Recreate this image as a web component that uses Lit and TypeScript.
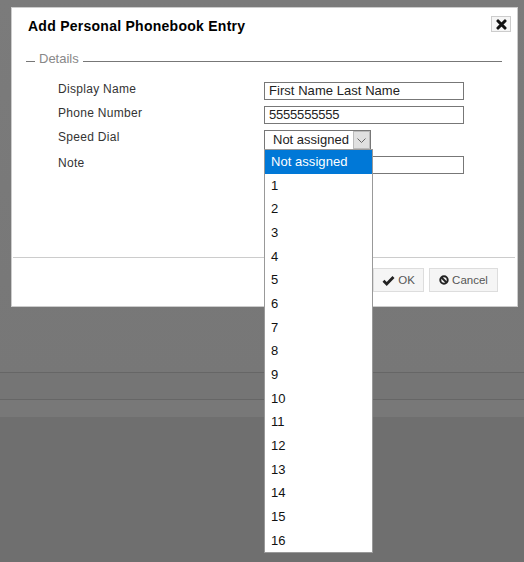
import { css, html, LitElement } from "lit";
import { customElement } from "lit/decorators.js";

const speedDials = ["Not assigned", ...Array.from({ length: 16 }, (_, i) => String(i + 1))];

@customElement("app-root")
export class AppRoot extends LitElement {
  render() {
    return html`
      <div class="backdrop">
        <div class="band"></div>
        <div class="band short"></div>
        <div class="band tail"></div>
      </div>
      <div class="modal">
        <header class="head">
          <h1>Add Personal Phonebook Entry</h1>
          <button class="close">
            <svg width="11" height="11" viewBox="0 0 12 12">
              <path d="M2.2 2.2 L9.8 9.8 M9.8 2.2 L2.2 9.8" stroke="#111" stroke-width="3.4" stroke-linecap="round" fill="none"></path>
            </svg>
          </button>
        </header>
        <section class="details">
          <div class="legend">
            <span class="dash"></span>
            <span class="title">Details</span>
            <span class="rule"></span>
          </div>
          <div class="rows">
            <label>Display Name</label>
            <input value="First Name Last Name" />
            <label>Phone Number</label>
            <input class="digits" value="5555555555" />
            <label>Speed Dial</label>
            <div class="select">
              <span class="value">Not assigned</span>
              <span class="arrow">
                <svg width="9" height="5" viewBox="0 0 9 5">
                  <path d="M0.5 0.5 L4.5 4.5 L8.5 0.5" stroke="#666" fill="none"></path>
                </svg>
              </span>
            </div>
            <label class="note">Note</label>
            <input />
          </div>
        </section>
        <footer>
          <button>
            <svg width="13" height="11" viewBox="0 0 13 11">
              <path d="M1.5 5.8 L4.7 9 L11.5 2" stroke="#222" stroke-width="2.8" fill="none"></path>
            </svg>
            OK
          </button>
          <button class="cancel">
            <svg width="10" height="10" viewBox="0 0 10 10">
              <circle cx="5" cy="5" r="3.7" stroke="#222" stroke-width="2" fill="none"></circle>
              <path d="M2.5 2.5 L7.5 7.5" stroke="#222" stroke-width="2"></path>
            </svg>
            Cancel
          </button>
        </footer>
      </div>
      <ul class="dropdown">
        ${speedDials.map((d, i) => html`<li class=${i === 0 ? "sel" : ""}>${d}</li>`)}
      </ul>
    `;
  }

  static styles = css`
    :host {
      display: block;
      position: relative;
      width: 524px;
      height: 562px;
      overflow: hidden;
      background: #6f6f6f;
      font-family: "Liberation Sans", Arial, sans-serif;
    }

    .backdrop {
      padding-top: 372px;
      background: linear-gradient(#7b7b7b, #757575);
    }

    .band {
      height: 26px;
      border-top: 1px solid #666;
      background: #757575;
    }

    .band.short {
      height: 17px;
      background: #787878;
    }

    .band.tail {
      height: 145px;
      border: 0;
      background: #6f6f6f;
    }

    .modal {
      position: absolute;
      left: 11px;
      top: 7px;
      width: 505px;
      height: 298px;
      background: #fff;
      border: 1px solid #ccc;
    }

    .head {
      display: flex;
      justify-content: space-between;
      align-items: flex-start;
      padding: 8px 6px 0 16px;
    }

    h1 {
      margin: 0;
      font-size: 14px;
      line-height: 20px;
      font-weight: bold;
      letter-spacing: 0.26px;
      color: #000;
    }

    .close {
      display: flex;
      align-items: center;
      justify-content: center;
      width: 20px;
      height: 16px;
      padding: 0;
      background: #f5f5f5;
      border: 1px solid #ccc;
    }

    .details {
      margin: 15px 15px 0 14px;
    }

    .legend {
      display: flex;
      align-items: flex-end;
      gap: 4px;
      font-size: 13px;
      line-height: 15px;
      color: #888;
    }

    .dash,
    .rule {
      height: 1px;
      margin-bottom: 4px;
      background: #777;
    }

    .dash {
      width: 9px;
    }

    .rule {
      flex: 1;
    }

    .rows {
      display: grid;
      grid-template-columns: 206px 200px;
      row-gap: 6px;
      padding: 16px 0 0 32px;
    }

    label {
      font-size: 12px;
      line-height: 14px;
      letter-spacing: 0.3px;
      color: #333;
    }

    input {
      box-sizing: border-box;
      width: 200px;
      height: 18px;
      padding: 0 4px 2px;
      border: 1px solid #777;
      font: 13px "Liberation Sans", Arial, sans-serif;
      letter-spacing: 0.05px;
      color: #222;
      background: #fff;
    }

    input.digits {
      letter-spacing: -0.2px;
    }

    .select {
      box-sizing: border-box;
      display: flex;
      justify-content: space-between;
      align-items: center;
      width: 107px;
      height: 20px;
      padding-left: 8px;
      border: 1px solid #777;
      font-size: 13px;
      white-space: nowrap;
      color: #222;
    }

    .value {
      padding-bottom: 2px;
    }

    .arrow {
      display: flex;
      align-items: center;
      justify-content: center;
      box-sizing: border-box;
      width: 17px;
      height: 18px;
      background: #e0e0e0;
      border: 1px solid #bbb;
    }

    footer {
      position: absolute;
      left: 1px;
      right: 2px;
      top: 249px;
      display: flex;
      justify-content: flex-end;
      gap: 5px;
      padding: 10px 17px 0 0;
      border-top: 1px solid #ccc;
    }

    footer button {
      display: flex;
      align-items: center;
      justify-content: center;
      gap: 3px;
      box-sizing: border-box;
      width: 51px;
      height: 24px;
      padding: 0;
      background: #f5f5f5;
      border: 1px solid #ddd;
      font: 11.5px "Liberation Sans", Arial, sans-serif;
      color: #555;
    }

    footer button.cancel {
      width: 69px;
    }

    .dropdown {
      position: absolute;
      left: 264px;
      top: 149px;
      box-sizing: border-box;
      width: 109px;
      height: 404px;
      margin: 0;
      padding: 0;
      list-style: none;
      background: #fff;
      border: 1px solid #999;
      font-size: 13px;
      letter-spacing: 0.05px;
      color: #111;
    }

    .dropdown li {
      height: 23.67px;
      line-height: 23.67px;
      padding-left: 6px;
    }

    .dropdown li.sel {
      background: #0078d7;
      color: #fff;
    }
  `;
}
